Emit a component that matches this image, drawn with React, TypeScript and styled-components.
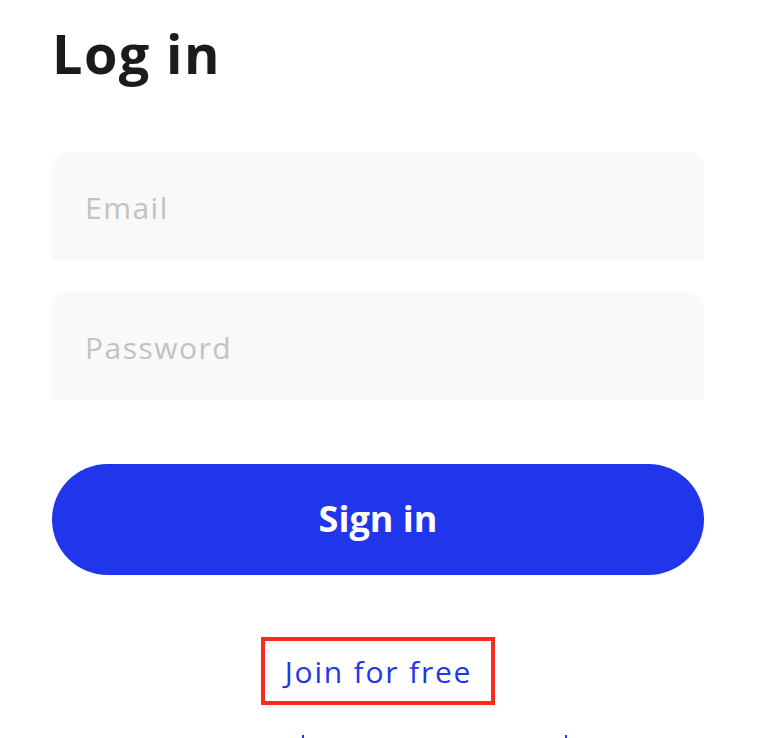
import React from "react";
import styled, { createGlobalStyle } from "styled-components";

const GlobalStyle = createGlobalStyle`
  html, body {
    margin: 0;
    padding: 0;
    background: #ffffff;
    font-family: "Open Sans", "Noto Sans", sans-serif;
  }
  * { box-sizing: border-box; }
`;

const Page = styled.main`
  width: 776px;
  height: 738px;
  overflow: hidden;
  padding: 21px 72px 0 52px;
  display: flex;
  flex-direction: column;
`;

const Title = styled.h1`
  margin: 0;
  font-size: 54px;
  line-height: 65px;
  font-weight: 700;
  color: #1b1b1b;
  letter-spacing: 1.4px;
`;

const Form = styled.form`
  margin-top: 66px;
  display: flex;
  flex-direction: column;
  gap: 32px;
`;

const Field = styled.input`
  width: 100%;
  height: 108px;
  border: none;
  outline: none;
  border-radius: 16px 16px 0 0;
  background: #f9f9f9;
  padding: 2px 33px 0;
  font-family: inherit;
  font-size: 30px;
  letter-spacing: 1.5px;
  color: #1b1b1b;
  &::placeholder {
    color: #c2c2c2;
  }
`;

const SubmitButton = styled.button`
  margin-top: 64px;
  width: 100%;
  height: 112px;
  border: none;
  border-radius: 56px;
  background: #2136ea;
  color: #ffffff;
  font-family: inherit;
  font-size: 36px;
  font-weight: 700;
  padding-bottom: 4px;
  cursor: pointer;
`;

const JoinRow = styled.div`
  margin-top: 62px;
  display: flex;
  justify-content: center;
`;

const JoinLink = styled.a`
  display: block;
  border: 4px solid #ff2a1f;
  padding: 13px 19px 11px 20px;
  font-size: 30px;
  line-height: 36px;
  letter-spacing: 1.8px;
  color: #2236e8;
  text-decoration: none;
`;

const Footer = styled.div`
  margin-top: 30px;
  padding-left: 250px;
  display: flex;
  gap: 261px;
`;

const Dot = styled.span`
  width: 2px;
  height: 3px;
  background: #2236e8;
`;

export default function App() {
  return (
    <>
      <GlobalStyle />
      <Page>
        <Title>Log in</Title>
        <Form onSubmit={(e) => e.preventDefault()}>
          <Field type="email" placeholder="Email" />
          <Field type="password" placeholder="Password" />
        </Form>
        <SubmitButton type="button">Sign in</SubmitButton>
        <JoinRow>
          <JoinLink href="#">Join for free</JoinLink>
        </JoinRow>
        <Footer>
          <Dot />
          <Dot />
        </Footer>
      </Page>
    </>
  );
}
